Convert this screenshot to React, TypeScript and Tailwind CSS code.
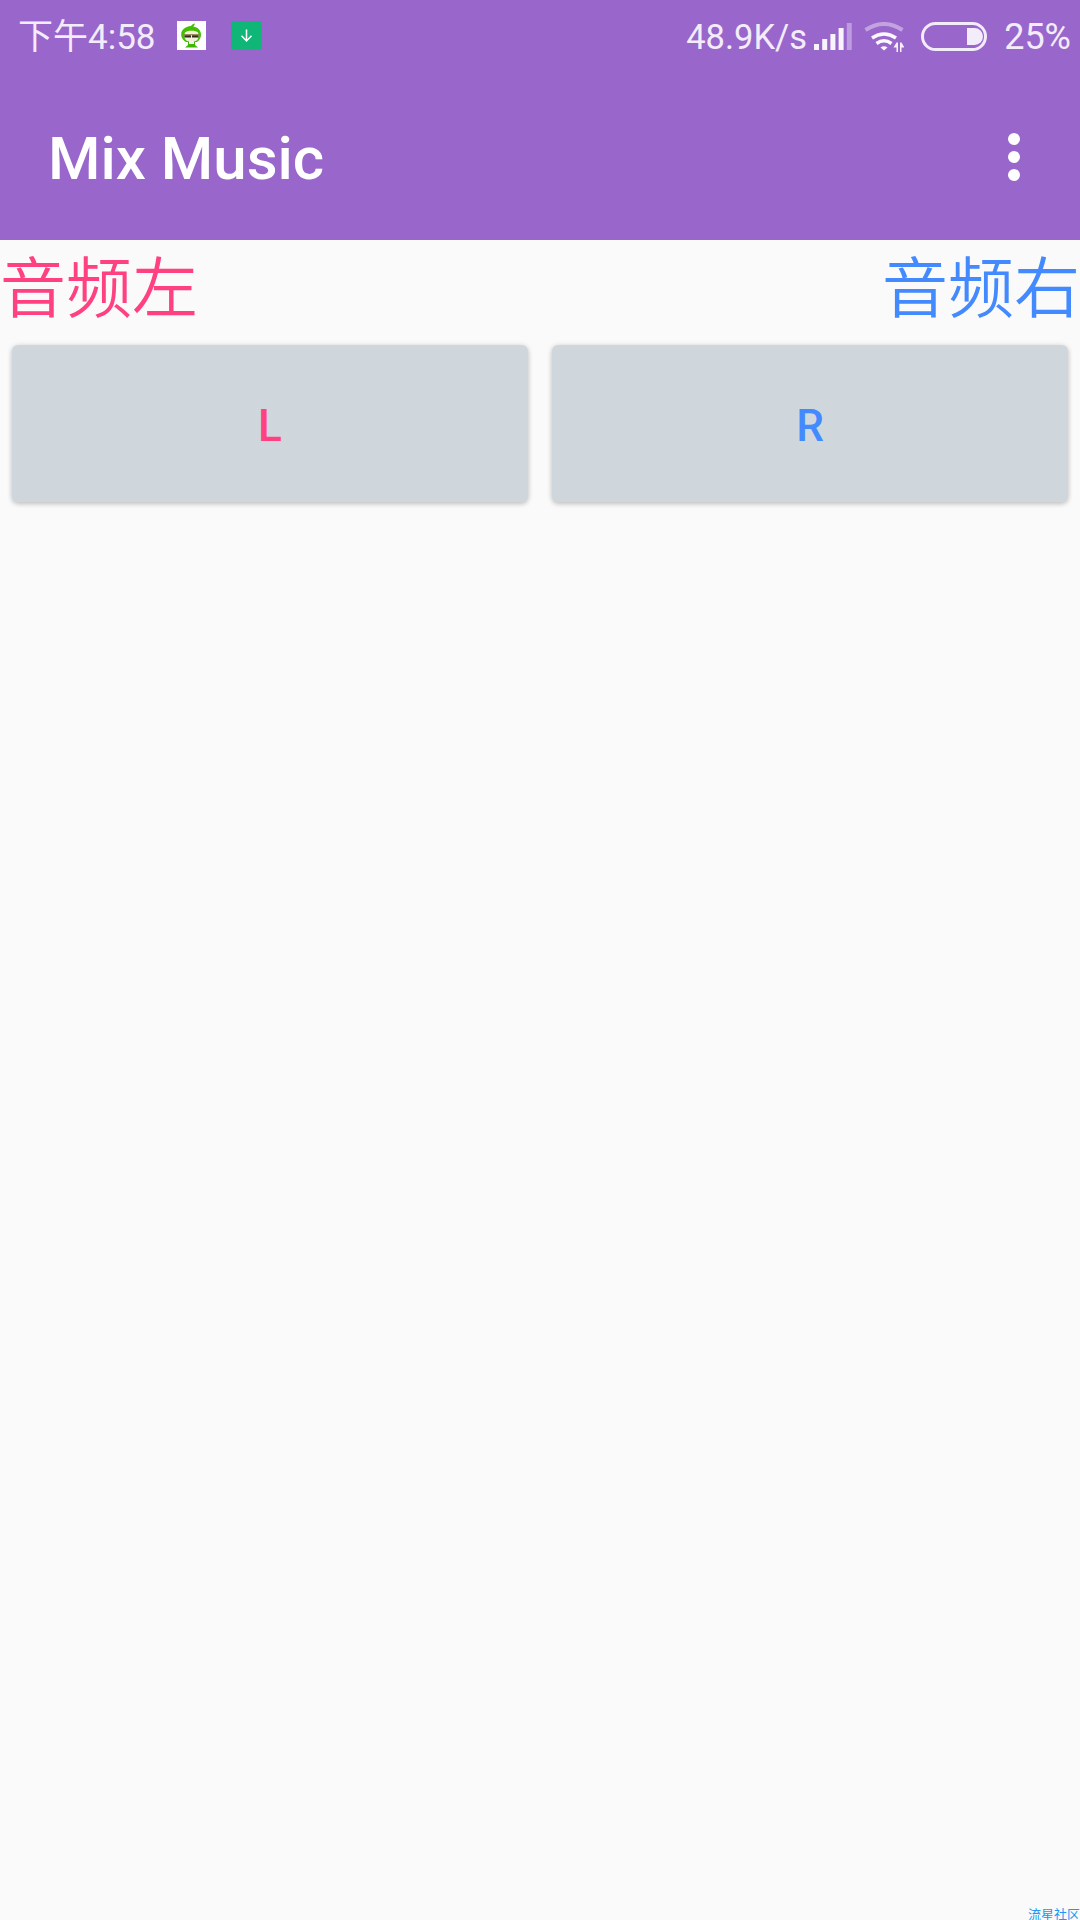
import React from "react";

const sans = "font-['Roboto','Noto_Sans_CJK_SC',sans-serif]";

function Pet() {
  return (
    <svg width="29" height="29" viewBox="0 0 29 29" className="block">
      <rect width="29" height="29" fill="#fff" />
      <path d="M14 5c1-1.500 2.500-2.500 4-2.500-.3 1.300-1 2.200-1.800 3 4.800.8 7.800 4 7.800 8 0 4.200-2.500 6.500-4 7.500H9c-2-1.200-4.800-3.500-4.800-7.500C4.200 9 8 5.500 14 5z" fill="#45bd05" />
      <path d="M8 11.500c2-2.300 11-2.300 13 0 1 2 .8 6-.8 7.500-2 2-9.500 2-11.400 0C7.200 17.500 7 13.500 8 11.500z" fill="#eef0d8" />
      <rect x="7.500" y="14.200" width="6.500" height="2.300" fill="#2f2a1a" />
      <rect x="15" y="14.200" width="6.500" height="2.300" fill="#2f2a1a" />
      <rect x="7" y="13.200" width="15" height="1" fill="#8a7440" />
      <path d="M11 21h7v3l3 2.500H8l3-2.500z" fill="#3fb505" />
      <rect x="12" y="20" width="5" height="3" fill="#f4f4e6" />
    </svg>
  );
}

function Download() {
  return (
    <svg width="31" height="29" viewBox="0 0 31 29" className="block">
      <rect width="31" height="29" rx="2" fill="#10b678" />
      <path d="M15.500 8.500v11.500M10.500 14.800l5 5.200 5-5.200" fill="none" stroke="#fff" strokeWidth="1.500" />
    </svg>
  );
}

function Signal() {
  const bars = [
    { h: 6, o: 0.93 },
    { h: 11, o: 0.93 },
    { h: 16, o: 0.93 },
    { h: 22, o: 0.93 },
    { h: 27, o: 0.35 },
  ];
  return (
    <svg width="39" height="27" viewBox="0 0 39 27" className="block">
      {bars.map((b, i) => (
        <rect key={i} x={1 + i * 8.2} y={27 - b.h} width="5" height={b.h} fill="#fff" fillOpacity={b.o} />
      ))}
    </svg>
  );
}

function Wifi() {
  return (
    <svg width="40" height="30" viewBox="0 0 40 30" className="block">
      <path d="M1.500 8Q20-4 38.500 8" fill="none" stroke="#fff" strokeOpacity="0.4" strokeWidth="4" />
      <path d="M8 16Q20 8 32 16" fill="none" stroke="#fff" strokeOpacity="0.95" strokeWidth="3.500" />
      <path d="M12.500 21.500Q20 16 27.500 21.500" fill="none" stroke="#fff" strokeOpacity="0.95" strokeWidth="3.500" />
      <path d="M16.500 25.500Q20 22.800 23.500 25.500L20 28.500z" fill="#fff" fillOpacity="0.95" />
      <path d="M32.500 20.500h1.500v9.500h-1.500v-4.500h-3zM36 20.500h1.500l3 5h-3v4.500H36z" fill="#fff" fillOpacity="0.9" />
    </svg>
  );
}

function Battery() {
  return (
    <div className="flex h-[29px] w-[66px] items-center justify-end rounded-[15px] border-[3px] border-[#f3ecfa] pr-[1px]">
      <div className="h-[17px] w-[16px] rounded-r-[9px] bg-[#f3ecfa]" />
    </div>
  );
}

export default function App() {
  return (
    <div className={`flex h-[1920px] w-[1080px] flex-col bg-[#fafafa] ${sans}`}>
      <header className="h-[240px] bg-[#9966cc] text-white">
        <div className="flex h-[72px] items-center text-[#f3ecfa]">
          <div className="ml-[18px] flex items-center">
            <span className="mt-[2px] text-[35px] leading-none">下午4:58</span>
            <div className="ml-[21px] mb-[2px]"><Pet /></div>
            <div className="ml-[25px] mb-[2px]"><Download /></div>
          </div>
          <div className="ml-auto mr-[9px] flex items-center">
            <span className="mt-[2px] text-[34.5px] leading-none">48.9K/s</span>
            <div className="ml-[6px]"><Signal /></div>
            <div className="ml-[12px] mt-[2px]"><Wifi /></div>
            <div className="ml-[17px]"><Battery /></div>
            <span className="ml-[17px] mt-[2px] text-[36px] leading-none">25%</span>
          </div>
        </div>
        <div className="flex h-[168px] items-center pt-[5px] pl-[48px] pr-[60px]">
          <h1 className="text-[60px] font-medium leading-none">Mix Music</h1>
          <div className="ml-auto mb-[4px] flex flex-col gap-[6px]">
            <span className="h-[12px] w-[12px] rounded-full bg-white" />
            <span className="h-[12px] w-[12px] rounded-full bg-white" />
            <span className="h-[12px] w-[12px] rounded-full bg-white" />
          </div>
        </div>
      </header>

      <div className="flex h-[90px] items-center justify-between pb-[4px] text-[66px] leading-none font-['Noto_Sans_CJK_SC',sans-serif] font-[350]">
        <span className="text-[#ff4081]">音频左</span>
        <span className="text-[#448aff]">音频右</span>
      </div>

      <div className="mt-[15px] grid grid-cols-2 gap-[24px] px-[12px]">
        <button className="flex h-[157px] items-center justify-center rounded-[6px] bg-[#cfd7dd] pt-[4px] text-[44px] font-medium text-[#ff4081] shadow-[0_2px_5px_rgba(0,0,0,0.2),0_0_6px_rgba(0,0,0,0.08)]">L</button>
        <button className="flex h-[157px] items-center justify-center rounded-[6px] bg-[#cfd7dd] pt-[4px] text-[44px] font-medium text-[#448aff] shadow-[0_2px_5px_rgba(0,0,0,0.2),0_0_6px_rgba(0,0,0,0.08)]">R</button>
      </div>

      <div className="mt-auto flex justify-end">
        <span className="text-[13px] leading-[13px] text-[#2196f3] font-['Noto_Sans_CJK_SC',sans-serif]">流星社区</span>
      </div>
    </div>
  );
}
